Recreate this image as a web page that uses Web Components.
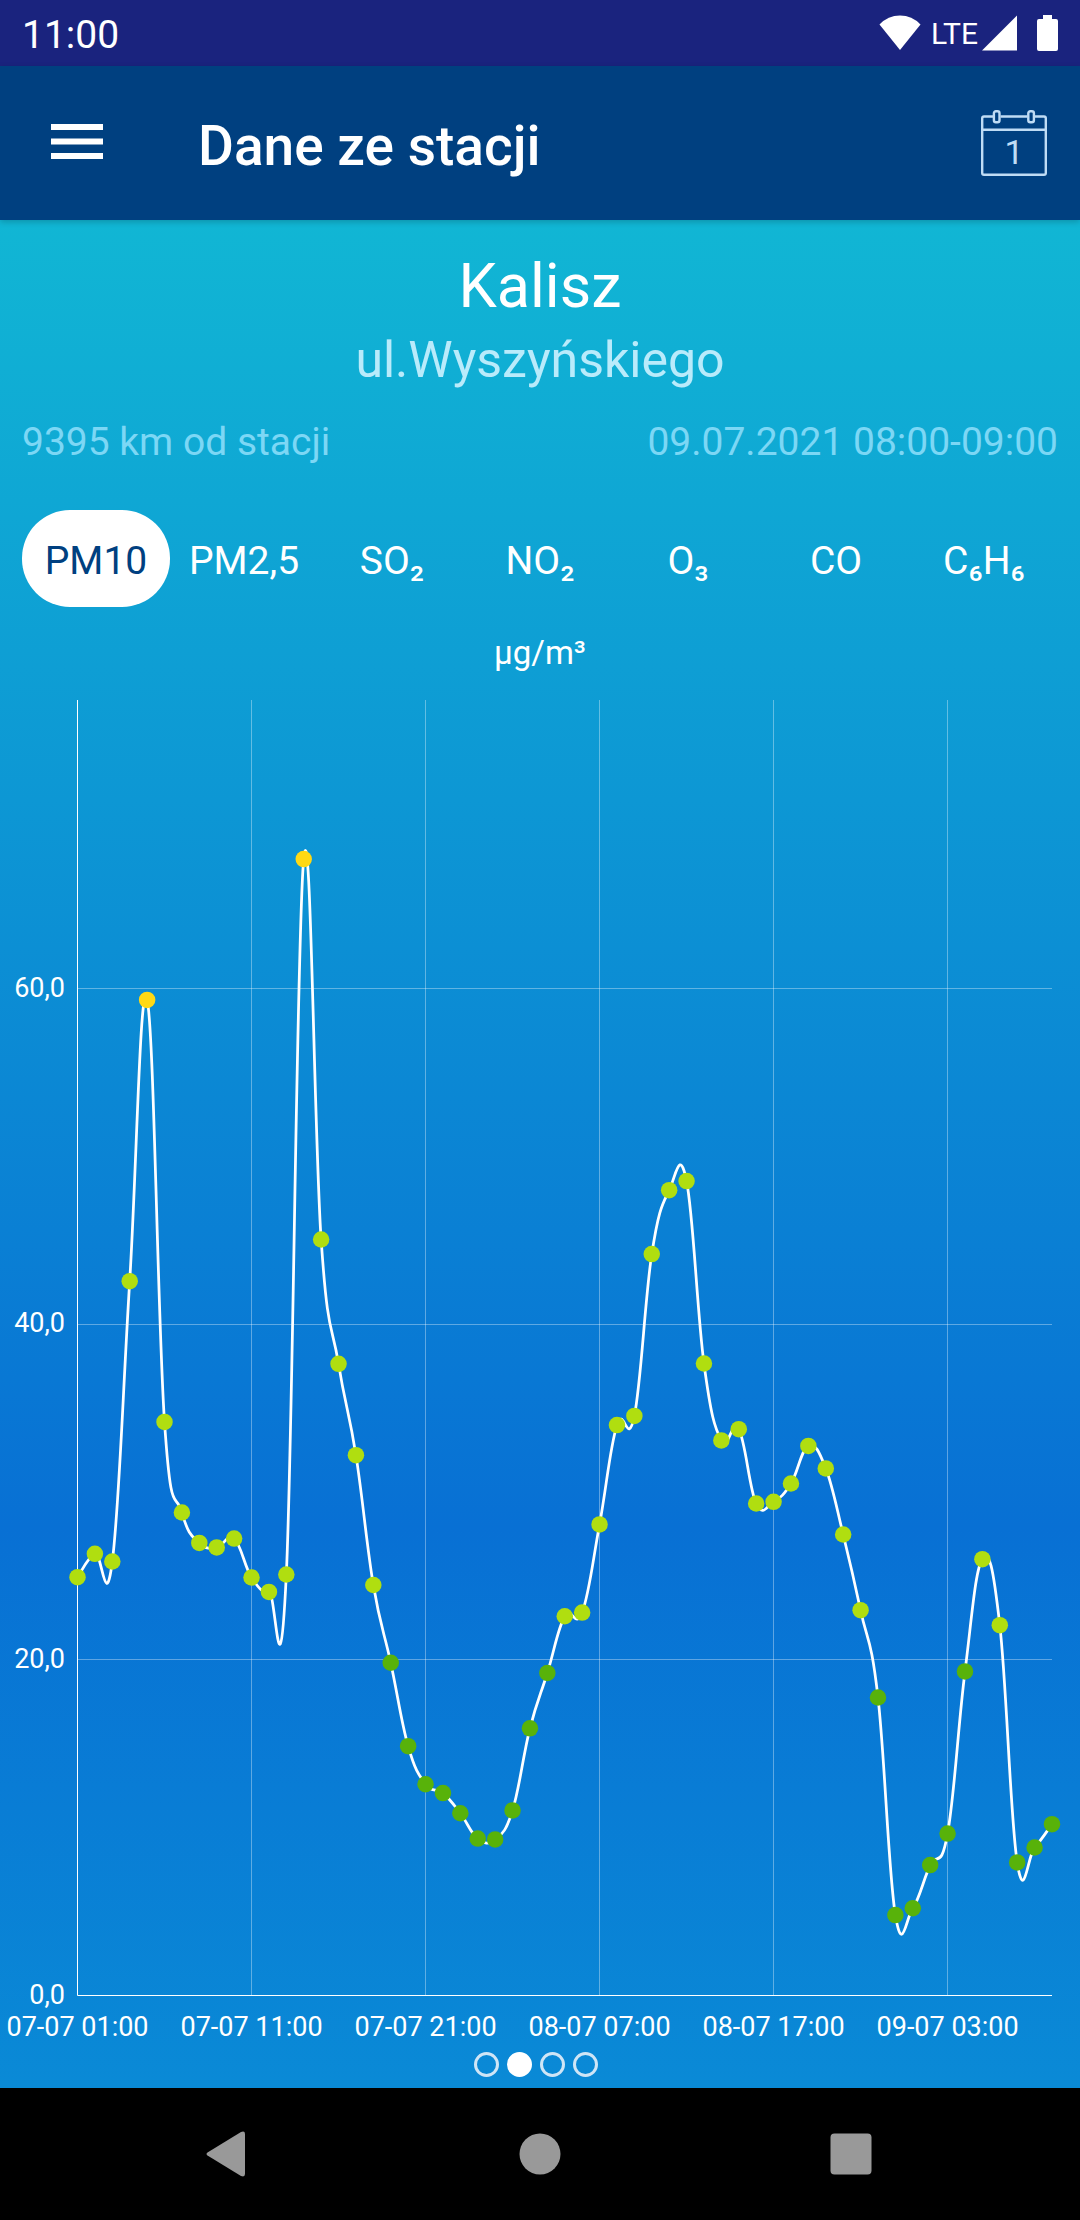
<!DOCTYPE html>
<html lang="pl">
<head>
<meta charset="utf-8">
<meta name="viewport" content="width=device-width, initial-scale=1">
<title>Dane ze stacji</title>
<style>
  body {
    margin: 0;
    background: #000;
    font-family: Roboto, "Noto Sans", sans-serif;
  }
</style>
</head>
<body>
<station-page>
  <status-bar slot="top">11:00</status-bar>
  <app-bar slot="top">Dane ze stacji</app-bar>
  <station-header>
    <span slot="city">Kalisz</span>
    <span slot="street">ul.Wyszyńskiego</span>
    <span slot="distance">9395 km od stacji</span>
    <span slot="time">09.07.2021 08:00-09:00</span>
  </station-header>
  <pollutant-tabs>
    <pollutant-tab selected>PM10</pollutant-tab>
    <pollutant-tab>PM2,5</pollutant-tab>
    <pollutant-tab>SO₂</pollutant-tab>
    <pollutant-tab>NO₂</pollutant-tab>
    <pollutant-tab>O₃</pollutant-tab>
    <pollutant-tab>CO</pollutant-tab>
    <pollutant-tab>C₆H₆</pollutant-tab>
  </pollutant-tabs>
  <level-chart>µg/m³</level-chart>
  <page-dots count="4" active="1"></page-dots>
  <nav-bar slot="bottom"></nav-bar>
</station-page>

<script>
class StationPage extends HTMLElement {
  constructor() {
    super();
    this.attachShadow({ mode: "open" });
  }

  connectedCallback() {
    this.shadowRoot.innerHTML = `
      <style>
        :host {
          display: flex;
          flex-direction: column;
          min-height: 100vh;
        }
        main {
          flex: 1;
          display: flex;
          flex-direction: column;
          background: linear-gradient(#11b6d4, #0870d4 70%, #0a8ad6);
        }
      </style>
      <slot name="top"></slot>
      <main><slot></slot></main>
      <slot name="bottom"></slot>
    `;
  }
}

class StatusBar extends HTMLElement {
  constructor() {
    super();
    this.attachShadow({ mode: "open" });
  }

  connectedCallback() {
    this.shadowRoot.innerHTML = `
      <style>
        :host {
          display: flex;
          align-items: center;
          justify-content: space-between;
          height: 66px;
          padding: 0 22px;
          background: #1a237e;
          color: #fff;
          font-size: 39px;
        }
        time {
          padding-top: 4px;
        }
        .icons {
          display: flex;
          align-items: center;
        }
        .network {
          margin: 0 4px 0 10px;
          font-size: 30px;
        }
        .battery {
          margin-left: 20px;
        }
        svg {
          display: block;
          fill: #fff;
        }
      </style>
      <time><slot></slot></time>
      <div class="icons">
        <svg width="42" height="36" viewBox="0 0 42 36"><path d="M21 35 L0.500 9.500 Q9 0.500 21 0.500 T41.500 9.500 Z"/></svg>
        <span class="network">LTE</span>
        <svg width="35" height="36" viewBox="0 0 35 36"><path d="M0 35.500 H35 V0.500 Z"/></svg>
        <svg class="battery" width="21" height="36" viewBox="0 0 21 36"><path d="M6 0 H15 V4 H19 Q21 4 21 6 V34 Q21 36 19 36 H2 Q0 36 0 34 V6 Q0 4 2 4 H6 Z"/></svg>
      </div>
    `;
  }
}

class AppBar extends HTMLElement {
  constructor() {
    super();
    this.attachShadow({ mode: "open" });
  }

  connectedCallback() {
    this.shadowRoot.innerHTML = `
      <style>
        :host {
          display: flex;
          align-items: center;
          height: 154px;
          background: #004080;
          color: #fff;
          box-shadow: 0 2px 6px rgba(0, 0, 0, 0.2);
          z-index: 1;
        }
        button {
          display: flex;
          align-items: center;
          justify-content: center;
          height: 100%;
          padding: 0;
          border: 0;
          background: none;
          cursor: pointer;
        }
        .menu {
          width: 154px;
        }
        .date {
          width: 132px;
        }
        h1 {
          flex: 1;
          margin: 0;
          padding: 6px 0 0 44px;
          font-size: 55px;
          font-weight: 500;
          line-height: 64px;
        }
      </style>
      <button class="menu" aria-label="Menu">
        <svg width="52" height="38" viewBox="0 0 52 38" fill="#fff">
          <rect width="52" height="6"/>
          <rect y="14.500" width="52" height="6"/>
          <rect y="29" width="52" height="6"/>
        </svg>
      </button>
      <h1><slot></slot></h1>
      <button class="date" aria-label="Data">
        <svg width="66" height="66" viewBox="0 0 66 66" fill="none" stroke="#bfdcf5" stroke-width="2.400">
          <path d="M12 6.500 H3 Q1.200 6.500 1.200 8.300 V63 Q1.200 64.800 3 64.800 H63 Q64.800 64.800 64.800 63 V8.300 Q64.800 6.500 63 6.500 H54 M19.500 6.500 H46.500 M1.200 19.700 H64.800"/>
          <rect x="12.900" y="1.200" width="5.600" height="11" rx="2"/>
          <rect x="47.300" y="1.200" width="5.600" height="11" rx="2"/>
          <text x="33" y="54" text-anchor="middle" font-family="Roboto, sans-serif" font-size="34" fill="#bfdcf5" stroke="none">1</text>
        </svg>
      </button>
    `;
  }
}

class StationHeader extends HTMLElement {
  constructor() {
    super();
    this.attachShadow({ mode: "open" });
  }

  connectedCallback() {
    this.shadowRoot.innerHTML = `
      <style>
        :host {
          display: block;
          padding: 30px 22px 0;
          text-align: center;
        }
        h2, p {
          margin: 0;
          font-weight: 400;
        }
        h2 {
          color: #fff;
          font-size: 61px;
          line-height: 72px;
        }
        .street {
          margin-top: 8px;
          color: #b9ebfb;
          font-size: 50px;
          line-height: 60px;
        }
        .meta {
          display: flex;
          justify-content: space-between;
          margin-top: 28px;
          color: #7cd7f5;
          font-size: 39px;
          line-height: 48px;
        }
      </style>
      <h2><slot name="city"></slot></h2>
      <p class="street"><slot name="street"></slot></p>
      <div class="meta">
        <slot name="distance"></slot>
        <slot name="time"></slot>
      </div>
    `;
  }
}

class PollutantTabs extends HTMLElement {
  constructor() {
    super();
    this.attachShadow({ mode: "open" });
  }

  connectedCallback() {
    this.shadowRoot.innerHTML = `
      <style>
        :host {
          display: flex;
          margin: 44px 22px 0;
        }
      </style>
      <slot></slot>
    `;
    this.addEventListener("click", (event) => {
      const tab = event.target.closest("pollutant-tab");
      if (!tab) return;
      this.querySelectorAll("pollutant-tab").forEach((item) => {
        item.toggleAttribute("selected", item === tab);
      });
    });
  }
}

class PollutantTab extends HTMLElement {
  constructor() {
    super();
    this.attachShadow({ mode: "open" });
  }

  connectedCallback() {
    this.shadowRoot.innerHTML = `
      <style>
        :host {
          display: block;
          flex: 1 1 0;
          min-width: 0;
        }
        button {
          width: 100%;
          height: 97px;
          padding: 4px 0 0;
          border: 0;
          border-radius: 48px;
          background: none;
          color: #fff;
          font: inherit;
          font-size: 39px;
          line-height: 48px;
          white-space: nowrap;
          cursor: pointer;
        }
        :host([selected]) button {
          background: #fff;
          color: #004080;
        }
      </style>
      <button type="button"><slot></slot></button>
    `;
  }
}

class LevelChart extends HTMLElement {
  constructor() {
    super();
    this.attachShadow({ mode: "open" });
    this.values = [
      24.93, 26.32, 25.86, 42.57, 59.33, 34.18, 28.78, 26.97, 26.7, 27.23,
      24.91, 24.05, 25.09, 67.72, 45.05, 37.64, 32.2, 24.46, 19.83, 14.86,
      12.59, 12.06, 10.86, 9.35, 9.3, 11.03, 15.92, 19.22, 22.6, 22.82,
      28.07, 33.99, 34.54, 44.18, 47.99, 48.53, 37.66, 33.08, 33.75, 29.32,
      29.42, 30.51, 32.75, 31.41, 27.47, 22.96, 17.76, 4.79, 5.2, 7.77,
      9.65, 19.31, 26, 22.07, 7.93, 8.82, 10.21,
    ];
    this.labels = [
      "07-07 01:00", "07-07 11:00", "07-07 21:00",
      "08-07 07:00", "08-07 17:00", "09-07 03:00",
    ];
    this.max = 77.2;
  }

  connectedCallback() {
    this.shadowRoot.innerHTML = `
      <style>
        :host {
          flex: 1;
          display: flex;
          flex-direction: column;
          color: #fff;
        }
        .unit {
          margin-top: 26px;
          font-size: 33px;
          line-height: 40px;
          text-align: center;
        }
        .plot {
          flex: 1;
          min-height: 600px;
          contain: size;
        }
        svg {
          display: block;
        }
        text {
          fill: #fff;
          font-size: 27px;
        }
        .grid {
          stroke: rgba(255, 255, 255, 0.35);
        }
        .axis {
          stroke: #fff;
        }
        .curve {
          fill: none;
          stroke: #fff;
          stroke-width: 2.75;
        }
      </style>
      <div class="unit"><slot></slot></div>
      <div class="plot"></div>
    `;
    this.plot = this.shadowRoot.querySelector(".plot");
    this.draw();
    new ResizeObserver(() => this.draw()).observe(this.plot);
  }

  levelColor(value) {
    if (value > 50) return "#ffd914";
    return value > 20 ? "#b0de10" : "#58b20a";
  }

  // Cubic line, each tangent is a fifth of the distance between neighbours
  curvePath(points) {
    const at = (i) => points[Math.max(0, Math.min(points.length - 1, i))];
    let d = `M${points[0].x} ${points[0].y}`;
    for (let i = 1; i < points.length; i++) {
      const prev = at(i - 1);
      const cur = at(i);
      const x1 = prev.x + (cur.x - at(i - 2).x) * 0.2;
      const y1 = prev.y + (cur.y - at(i - 2).y) * 0.2;
      const x2 = cur.x - (at(i + 1).x - prev.x) * 0.2;
      const y2 = cur.y - (at(i + 1).y - prev.y) * 0.2;
      d += ` C${x1} ${y1} ${x2} ${y2} ${cur.x} ${cur.y}`;
    }
    return d;
  }

  draw() {
    const width = this.plot.clientWidth;
    const height = this.plot.clientHeight;
    const left = 77.5;
    const right = width - 28;
    const top = 27;
    const bottom = height - 52.5;
    const step = (right - left) / (this.values.length - 1);
    const x = (i) => left + i * step;
    const y = (value) => bottom - (value / this.max) * (bottom - top);
    const crisp = (n) => Math.floor(n) + 0.5;
    const points = this.values.map((value, i) => ({ x: x(i), y: y(value), value }));

    const columns = this.labels.map((label, i) => `
      ${i ? `<path class="grid" d="M${crisp(x(i * 10))} ${top} V${bottom}"/>` : ""}
      <text x="${x(i * 10)}" y="${height - 12}" text-anchor="middle">${label}</text>`);
    const rows = [0, 20, 40, 60].map((value) => `
      ${value ? `<path class="grid" d="M${left} ${crisp(y(value))} H${right}"/>` : ""}
      <text x="65" y="${Math.round(y(value)) + 8}" text-anchor="end">${value},0</text>`);
    const dots = points.map((p) =>
      `<circle cx="${p.x}" cy="${p.y}" r="8.25" fill="${this.levelColor(p.value)}"/>`);

    this.plot.innerHTML = `
      <svg width="${width}" height="${height}" role="img" aria-label="PM10">
        ${columns.join("")}
        ${rows.join("")}
        <path class="axis" d="M${left} ${top} V${bottom} H${right}" fill="none"/>
        <path class="curve" d="${this.curvePath(points)}"/>
        ${dots.join("")}
      </svg>
    `;
  }
}

class PageDots extends HTMLElement {
  constructor() {
    super();
    this.attachShadow({ mode: "open" });
  }

  connectedCallback() {
    const count = parseInt(this.getAttribute("count"), 10) || 0;
    const active = parseInt(this.getAttribute("active"), 10) || 0;
    let dots = "";
    for (let i = 0; i < count; i++) {
      dots += `<button type="button" aria-label="${i + 1}" class="${i === active ? "active" : ""}"></button>`;
    }
    this.shadowRoot.innerHTML = `
      <style>
        :host {
          display: flex;
          justify-content: center;
          padding: 4px 0 11px;
        }
        button {
          box-sizing: border-box;
          width: 25px;
          height: 25px;
          margin: 0 8px 0 0;
          padding: 0;
          border: 3px solid #cfe5f6;
          border-radius: 50%;
          background: none;
        }
        .active {
          border-color: #fff;
          background: #fff;
        }
      </style>
      ${dots}
    `;
  }
}

class NavBar extends HTMLElement {
  constructor() {
    super();
    this.attachShadow({ mode: "open" });
  }

  connectedCallback() {
    this.shadowRoot.innerHTML = `
      <style>
        :host {
          display: grid;
          grid-template-columns: repeat(3, 1fr);
          height: 132px;
          padding: 0 74px;
          background: #000;
        }
        button {
          display: flex;
          align-items: center;
          justify-content: center;
          padding: 0;
          border: 0;
          background: none;
        }
        svg {
          fill: #999;
        }
      </style>
      <button aria-label="Wstecz">
        <svg width="46" height="46" viewBox="0 0 46 46"><path d="M1.500 21.500 L35 1 Q39 -0.500 39 3 V43 Q39 46.500 35 45 L1.500 24.500 Q-0.500 23 1.500 21.500 Z"/></svg>
      </button>
      <button aria-label="Ekran główny">
        <svg width="42" height="42" viewBox="0 0 42 42"><circle cx="21" cy="21" r="20.500"/></svg>
      </button>
      <button aria-label="Ostatnie">
        <svg width="42" height="42" viewBox="0 0 42 42"><rect x="0.500" y="0.500" width="41" height="41" rx="4"/></svg>
      </button>
    `;
  }
}

customElements.define("station-page", StationPage);
customElements.define("status-bar", StatusBar);
customElements.define("app-bar", AppBar);
customElements.define("station-header", StationHeader);
customElements.define("pollutant-tabs", PollutantTabs);
customElements.define("pollutant-tab", PollutantTab);
customElements.define("level-chart", LevelChart);
customElements.define("page-dots", PageDots);
customElements.define("nav-bar", NavBar);
</script>
</body>
</html>
